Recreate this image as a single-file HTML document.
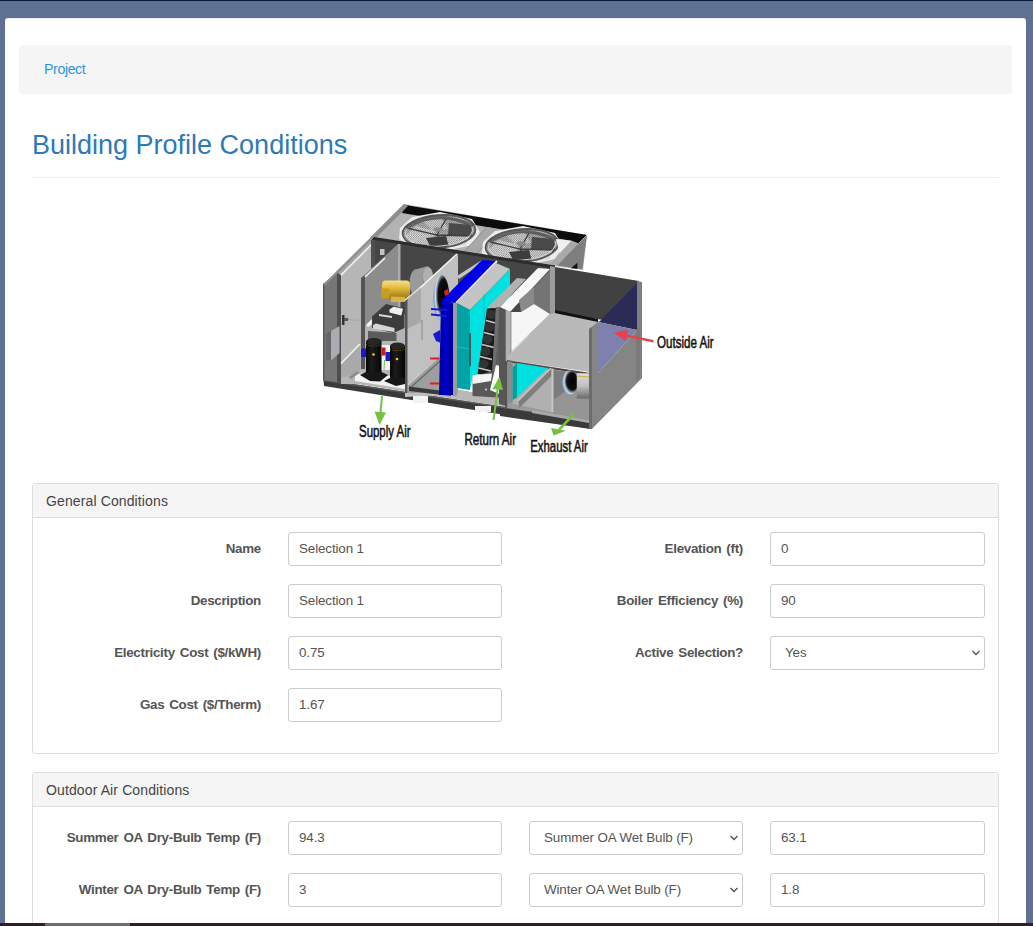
<!DOCTYPE html>
<html><head><meta charset="utf-8">
<style>
*{box-sizing:border-box;margin:0;padding:0}
html,body{width:1033px;height:926px;overflow:hidden}
body{background:#5f7092;font-family:"Liberation Sans",sans-serif;position:relative}
.topbar{position:absolute;left:0;top:0;width:1033px;height:1px;background:#021a38}
.wrap{position:absolute;left:5px;top:18px;width:1021px;height:920px;background:#fff;border-radius:3px;border-top:1px solid #eee}
.bc{position:absolute;left:14px;top:26px;width:993px;height:49px;background:#f5f5f5;border-radius:4px}
.bc a{position:absolute;left:25px;top:16px;font-size:14.2px;letter-spacing:-0.4px;color:#2a96e2;text-decoration:none}
h1{position:absolute;left:27px;top:111px;font-size:27px;font-weight:normal;color:#2e7ab5;white-space:nowrap}
.hr{position:absolute;left:27px;top:158px;width:967px;height:1px;background:#eee}
.illo{position:absolute;left:310px;top:195px}
.panel{position:absolute;left:27px;width:967px;border:1px solid #ddd;border-radius:3px;background:#fff}
.ph{height:34px;background:#f5f5f5;border-bottom:1px solid #ddd;font-size:14px;letter-spacing:0.12px;color:#444;padding:9px 13px}
.lbl{position:absolute;font-size:13.4px;letter-spacing:-0.3px;word-spacing:1.5px;font-weight:bold;color:#555;text-align:right;white-space:nowrap}
.inp{position:absolute;height:34px;border:1px solid #ccc;border-radius:3px;font-size:13.4px;letter-spacing:-0.12px;color:#555;padding:8px 10px;white-space:nowrap;background:#fff}
.sel svg{position:absolute;right:3px;top:12px}
.bottombar{position:absolute;left:0;top:923px;width:1033px;height:3px;background:#2a2228}
.bottombar i{position:absolute;left:45px;top:0;width:85px;height:3px;background:#6e6a70}
</style></head><body>
<div class="topbar"></div>
<div class="wrap">
  <div class="bc"><a>Project</a></div>
  <h1>Building Profile Conditions</h1>
  <div class="hr"></div>
</div>
<svg class="illo" width="420" height="270" viewBox="310 195 420 270">
<defs>
<pattern id="hatch" width="2.2" height="2.2" patternUnits="userSpaceOnUse"><path d="M0 2.2 L2.2 0" stroke="#3a3a3a" stroke-width="0.45"/></pattern>
<linearGradient id="mot" x1="0" y1="0" x2="0" y2="1"><stop offset="0" stop-color="#f6e08a"/><stop offset="0.45" stop-color="#e0b838"/><stop offset="1" stop-color="#9a7410"/></linearGradient>
<radialGradient id="cone" cx="0.65" cy="0.45" r="0.65"><stop offset="0" stop-color="#000"/><stop offset="0.55" stop-color="#111"/><stop offset="0.8" stop-color="#c8dcee"/><stop offset="1" stop-color="#7090b8"/></radialGradient>
<linearGradient id="comp" x1="0" y1="0" x2="1" y2="0"><stop offset="0" stop-color="#050505"/><stop offset="0.35" stop-color="#1c1c1c"/><stop offset="1" stop-color="#060606"/></linearGradient>
<linearGradient id="cyl" x1="0" y1="0" x2="0" y2="1"><stop offset="0" stop-color="#dedede"/><stop offset="0.5" stop-color="#c0c0c0"/><stop offset="1" stop-color="#6a6a6a"/></linearGradient>
<linearGradient id="drum" x1="0" y1="0" x2="1" y2="1"><stop offset="0" stop-color="#a8a8a8"/><stop offset="0.6" stop-color="#8c8c8c"/><stop offset="1" stop-color="#6e6e6e"/></linearGradient>
</defs>
<!-- ===== fan deck ===== -->
<polygon points="404,204 587,235 583,270 555,266 371,237" fill="#b3b3b3"/>
<polygon points="405,205 587,235 578.5,243.4 571.5,240.7 402,213" fill="#0c0c0c"/>
<polygon points="404,204 408,206 375,239 371,237" fill="#8e8e8e"/>
<!-- fan 1 -->
<g>
<polygon points="400,228 412,217 440,212 472,219 480,232 472,245 445,251 413,249 399,239" fill="#ececf0"/>
<ellipse cx="439" cy="231.5" rx="36.5" ry="16.3" transform="rotate(-4 439 231.5)" fill="#b4b4b4"/>
<polygon points="405,236 416,226 436,231 430,245 412,243" fill="#dedede"/>
<polygon points="423,221 441,218 448,229 433,231" fill="#d6d6d6"/>
<polygon points="447,236 470,236 466,245 447,247" fill="#d8d8d8"/>
<polygon points="449,223 472,225 472,236 448,235" fill="#4e4e4e"/>
<polygon points="426,238 446,236 449,247 431,248" fill="#3e3e3e"/>
<ellipse cx="439" cy="231.5" rx="36.5" ry="16.3" transform="rotate(-4 439 231.5)" fill="url(#hatch)"/>
<path d="M407 228 L437 235 L446 247 M437 235 L446 219 M437 235 L471 236" stroke="#3e3e3e" stroke-width="1.3" fill="none"/>
<ellipse cx="439" cy="231.5" rx="36.5" ry="16.3" transform="rotate(-4 439 231.5)" fill="none" stroke="#575757" stroke-width="1.8"/>
<ellipse cx="439" cy="231.5" rx="33.5" ry="14.5" transform="rotate(-4 439 231.5)" fill="none" stroke="#d0d0d0" stroke-width="1"/>
<path d="M406 228 Q437 208 473 226" stroke="#4a4a4a" stroke-width="3.5" fill="none" opacity="0.75"/>
<ellipse cx="438" cy="229.5" rx="4.5" ry="2.2" fill="#8a8a8a"/>
</g>
<!-- divider -->
<polygon points="487,227 499,229.5 477.6,252.8 464.8,250.8" fill="#a8a8a8"/>
<polyline points="487,227 464.8,250.8" fill="none" stroke="#777" stroke-width="0.6"/>
<polyline points="499,229.5 477.6,252.8" fill="none" stroke="#777" stroke-width="0.6"/>
<!-- fan 2 -->
<g transform="translate(83,14)">
<polygon points="400,228 412,217 440,212 472,219 480,232 472,245 445,251 413,249 399,239" fill="#ececf0"/>
<ellipse cx="439" cy="231.5" rx="36.5" ry="16.3" transform="rotate(-4 439 231.5)" fill="#b4b4b4"/>
<polygon points="405,236 416,226 436,231 430,245 412,243" fill="#dedede"/>
<polygon points="423,221 441,218 448,229 433,231" fill="#d6d6d6"/>
<polygon points="447,236 470,236 466,245 447,247" fill="#d8d8d8"/>
<polygon points="449,223 472,225 472,236 448,235" fill="#4e4e4e"/>
<polygon points="426,238 446,236 449,247 431,248" fill="#3e3e3e"/>
<ellipse cx="439" cy="231.5" rx="36.5" ry="16.3" transform="rotate(-4 439 231.5)" fill="url(#hatch)"/>
<path d="M407 228 L437 235 L446 247 M437 235 L446 219 M437 235 L471 236" stroke="#3e3e3e" stroke-width="1.3" fill="none"/>
<ellipse cx="439" cy="231.5" rx="36.5" ry="16.3" transform="rotate(-4 439 231.5)" fill="none" stroke="#575757" stroke-width="1.8"/>
<ellipse cx="439" cy="231.5" rx="33.5" ry="14.5" transform="rotate(-4 439 231.5)" fill="none" stroke="#d0d0d0" stroke-width="1"/>
<path d="M406 228 Q437 208 473 226" stroke="#4a4a4a" stroke-width="3.5" fill="none" opacity="0.75"/>
<ellipse cx="438" cy="229.5" rx="4.5" ry="2.2" fill="#8a8a8a"/>
</g>
<!-- right end of top section -->
<polygon points="556,239 571.5,240.7 559.6,253.6" fill="#f0f0f4"/>
<polygon points="571.5,240.7 578.5,243.4 557.4,265.5 549.3,265" fill="#a9a9a9"/>
<polygon points="578.5,243.4 587,235 582.3,269.3 557.4,265.5" fill="#7e7e7e"/>
<polyline points="578.5,243.4 587,235" fill="none" stroke="#b0b0b0" stroke-width="1"/>
<polygon points="571,268.2 577.4,262.8 577.4,268.8" fill="#111"/>
<!-- ===== interior back wall ===== -->
<polygon points="371,237 555,266 555,340 371,310" fill="#464646"/>
<polygon points="371,236.5 555,265.5 555,268.5 371,239.5" fill="#2c2c2c"/>
<!-- floor & base rail -->
<polygon points="324.5,378 337,376 341,378 360,372 405,380 505,398 592,414 592,420 324,379" fill="#b8b8b8"/>
<polygon points="323.5,379.5 592,420 592,429 324,386" fill="#3a3a3a"/>
<polygon points="323.5,379.5 592,420 592,421.5 323.5,381" fill="#5a5a5a"/>
<!-- ===== left end ===== -->
<polygon points="323,284 337,272 337,382 323,380" fill="#767676"/>
<polygon points="323,284 324.5,283 324.5,380 323,380" fill="#555"/>
<polygon points="337,272 341,274 341,383 337,382" fill="#4e4e4e"/>
<polygon points="341,276 372,240 372,384 341,384" fill="#b6b6b6"/>
<polygon points="336,272 372,237.5 372,243 341,275" fill="#a2a2a2"/>
<polyline points="341,275 372,244" fill="none" stroke="#f4f4f4" stroke-width="1.6"/>
<polyline points="324.3,285 404.6,205.2" fill="none" stroke="#8e8e8e" stroke-width="2.2"/>
<polygon points="371,240 375,240 375,267 371,268" fill="#505050"/>
<rect x="380" y="249" width="4.5" height="6" fill="#c4c4c4"/>
<!-- electrical box & latch -->
<polygon points="326,334 331,331 331,360.5 326,360" fill="#666"/>
<polygon points="331,331 339.5,326 339.5,353 331,360.5" fill="#ababb3"/>
<rect x="342" y="315" width="2.5" height="10" fill="#333"/>
<rect x="344" y="318" width="4" height="3" fill="#555"/>
<line x1="348" y1="319.5" x2="360" y2="320.5" stroke="#777" stroke-width="0.6" stroke-dasharray="1,1.5"/>
<!-- panel 2 bottom/floor -->
<polygon points="341,364 360,344 360,372 341,378" fill="#a9a9a9"/>
<polyline points="341,363.5 360,344" fill="none" stroke="#f4f4f4" stroke-width="1.6"/>
<!-- panel 3 -->
<polygon points="361,278 398,244 398,320 365,330 361,330" fill="#8c8c8c"/>
<polygon points="398,244 400.5,244 400.5,318 398,319" fill="#aaaaaa"/>
<polygon points="361,278 365,275 365,369 361,369" fill="#545454"/>
<polyline points="365,277 385,258" fill="none" stroke="#f2f2f2" stroke-width="1.5"/>
<!-- compressor bay -->
<polygon points="365,326 405,314 405,380 365,378" fill="#b4b4b4"/>
<polygon points="366,325 373,318 376,321 368,327" fill="#f4f4f4"/>
<!-- motor & blower -->
<polygon points="414,270 428,266 434,290 416,297" fill="url(#drum)"/>
<ellipse cx="416" cy="283" rx="6.5" ry="13.5" fill="#9a9a9a"/>
<ellipse cx="428" cy="276" rx="5" ry="9" fill="#b0b0b0"/>
<rect x="382" y="280.5" width="28" height="18" rx="4" fill="url(#mot)"/>
<rect x="381" y="288.5" width="8.5" height="10" rx="1" fill="#c89e22"/>
<polygon points="391,296.5 405,297 405,302 391,302" fill="#d9b445"/>
<!-- motor base tray -->
<polygon points="372,316.5 386,304 404.5,308.5 404.5,328 393.5,333 372,328" fill="#3c3c3c"/>
<polygon points="389.5,309.5 393.5,306.8 403,308.7 401.3,315.5 389.5,312.6" fill="#f0f0f0"/>
<polygon points="379,314 392,316 392,318 379,316" fill="#d8d8d8"/>
<polygon points="373,325 376,323.5 394.5,328 394.5,332 373,329" fill="#d6d6d6"/>
<polygon points="368,331 396.5,333 396.5,341 368,341" fill="#5c5c5c"/>
<!-- compressors -->
<rect x="381" y="345" width="10" height="25" fill="#f2f2f2"/>
<line x1="384.5" y1="360" x2="384" y2="370" stroke="#76c043" stroke-width="1"/>
<rect x="366" y="341" width="15.5" height="35" fill="url(#comp)"/>
<ellipse cx="373.75" cy="341.5" rx="7.75" ry="3.5" fill="#262626"/>
<polyline points="366,344.5 370,346 377,346 381.5,344.5" fill="none" stroke="#b8a020" stroke-width="0.6" stroke-dasharray="1,1"/>
<polygon points="355,374 375,373 405,379 405,389 355,381" fill="#f2f2f2"/>
<polygon points="360,375 366,372 381.5,372 388,375 380,381.5 370,381" fill="#161616"/>
<rect x="390" y="345.5" width="15" height="36" fill="url(#comp)"/>
<ellipse cx="397.5" cy="346" rx="7.5" ry="3.5" fill="#262626"/>
<polyline points="390,349 394,350.5 401,350.5 405,349" fill="none" stroke="#b8a020" stroke-width="0.6" stroke-dasharray="1,1"/>
<polygon points="384,381 390,378 405,378 405,384 396,386" fill="#161616"/>
<rect x="361" y="348.5" width="5" height="8.5" fill="#1818c8"/>
<rect x="385.5" y="352" width="4.5" height="9" fill="#1818c8"/>
<rect x="381.5" y="347.5" width="4" height="8" fill="#d01818"/>
<circle cx="373.5" cy="354.5" r="1.3" fill="#f0d030"/>
<circle cx="397" cy="359" r="1.3" fill="#f0d030"/>
<polygon points="348.5,377 357,371.5 359.5,373 351,379" fill="#8c8c8c"/>
<!-- ===== fan wall partition ===== -->
<polygon points="405,300 421,287 458,254 458,394 405,397" fill="#c0c0c0"/>
<polygon points="405,300 421,287 421,322 405,330" fill="#a8a8a8"/>
<polygon points="405,300 407.5,299 407.5,393 405,393" fill="#555"/>
<polyline points="404.5,300.5 421,287" fill="none" stroke="#e8e8e8" stroke-width="1.2"/>
<polyline points="420.5,287.5 457,254" fill="none" stroke="#f8f8f8" stroke-width="1.6"/>
<line x1="422" y1="320" x2="422" y2="340" stroke="#8a8a8a" stroke-width="1"/>
<ellipse cx="441.4" cy="298" rx="8" ry="23" fill="url(#cone)"/>
<polygon points="408,385 439,356 458,340 458,394 408,393" fill="#9e9e9e"/>
<polyline points="408,385 458,340" fill="none" stroke="#d8d8d8" stroke-width="1"/>
<polyline points="410,388 458,345" fill="none" stroke="#6a6a6a" stroke-width="1.4"/>
<polygon points="409,386.5 451,392 451,396 409,391" fill="#3a3a3a"/>
<!-- ===== blue coil ===== -->
<polygon points="457,276 482,260 484,262 459,279" fill="#c4c4c4"/>
<polygon points="482,260 497,261 456,303 441,301" fill="#0000e8"/>
<polygon points="441,301 456,303 453,395 439,395" fill="#0000a8"/>
<polygon points="444,301 449,302 447,395 444,395" fill="#0000c8"/>
<polyline points="456,303 497,261" fill="none" stroke="#eeeeee" stroke-width="1.8"/>
<polygon points="444,291 448,289 449,294 445,296" fill="#e02020"/>
<polygon points="431,308 447,309 447,311 431,310" fill="#1818d0"/>
<polygon points="431,313.5 446,315 446,317 431,315.5" fill="#1818d0"/>
<polygon points="433,334 440,330 441,343 436,341" fill="#1818d0"/>
<rect x="430" y="357.5" width="9" height="2" fill="#d82020"/>
<rect x="430" y="382.5" width="9" height="2" fill="#d82020"/>
<polygon points="453,303 457,303 457,396 453,396" fill="#9c9c9c"/>
<!-- ===== filter ===== -->
<polygon points="456,303 496,263 510,269 470,310" fill="#c4c4c4"/>
<polygon points="457,303 470,310 470,390 457,388" fill="#00a4a4"/>
<line x1="457" y1="347" x2="470" y2="349" stroke="#00d0d0" stroke-width="0.8"/>
<polygon points="470,310 510,269 510,300 488,309 477.5,375 472.5,377 470,390" fill="#00e2e2"/>
<line x1="484" y1="294" x2="484" y2="320" stroke="#00b8b8" stroke-width="0.6"/>
<polygon points="469,334 471,333 471,366 469,367" fill="#555"/>
<!-- ===== exhaust damper rack ===== -->
<polygon points="487,308 517,278 526,279 499,308" fill="#b2b2b2"/>
<polygon points="487,308.6 499,308.6 494,374.5 477.5,374.5" fill="#1b1b1b"/>
<g fill="#333">
<ellipse cx="491.5" cy="314.5" rx="5" ry="4.5"/><ellipse cx="489.5" cy="327" rx="5" ry="4.5"/><ellipse cx="487.5" cy="339.5" rx="5" ry="4.5"/><ellipse cx="485.5" cy="351.5" rx="5" ry="4.5"/><ellipse cx="483.5" cy="364" rx="5" ry="4.5"/>
</g>
<g stroke="#c8c8c8" stroke-width="1.7">
<line x1="486" y1="320.5" x2="497.5" y2="323.5"/><line x1="484" y1="332.5" x2="495.6" y2="335.5"/><line x1="482" y1="344.5" x2="494" y2="347.5"/><line x1="480" y1="356.5" x2="492" y2="359.5"/><line x1="478.5" y1="368" x2="491" y2="371"/>
</g>
<polygon points="496,307 506,310 506,396 492,376" fill="#5e5e5e"/>
<polygon points="496,307 499.5,307 495,376 492,376" fill="#6e6e6e"/>
<polygon points="472.5,377 505,367 505,398 472.5,396" fill="#585858"/>
<polygon points="472.5,375 492,373.5 491,381 472.5,384" fill="#f4f4f4"/>
<polygon points="490,390 496,365 505,367 504,396" fill="#fbfbfb"/>
<circle cx="486" cy="389.5" r="0.9" fill="#eee"/>
<!-- ===== white duct ===== -->
<polygon points="500,307 538,268 550,269 510,312" fill="#f7f7f7"/>
<polygon points="534,287 550,270 550,314 534,304" fill="#747474"/>
<polygon points="519,300 534,287 534,304 521,312" fill="#8a8a8a"/>
<polygon points="510,312 521,312 534,304 550,314 511,353" fill="#f6f6f6"/>
<polyline points="511,352 550,314" fill="none" stroke="#d0d0d0" stroke-width="1"/>
<polygon points="499,308 506,310 506,406 499,404" fill="#565656"/>
<polygon points="505.7,310 511,312 511,406 505.7,406" fill="#b2b2b2"/>
<polyline points="511,312 511,406" stroke="#777" stroke-width="0.7"/>
<!-- ===== hood ===== -->
<polygon points="550,266 555,267 555,313 550,315" fill="#9c9c9c"/>
<polygon points="555,267 639,281 633,325 555,312" fill="#414141"/>
<polygon points="555,310 598,319 598,324 555,315" fill="#121212"/>
<polygon points="600,321 639,281 637,330 598,322" fill="#2b2b58"/>
<polygon points="598,322 637,330 598,373" fill="#7e80ae"/>
<polygon points="637,281 642,282 642,378 637,380" fill="#7e7e7e"/>
<polygon points="511,353 550,314 554.5,313 598,322 590,372 507,360 507,357" fill="#b9b9b9"/>
<polygon points="507,360 589,372.8 589,375 507,362.5" fill="#4a4a4a"/>
<!-- lower section -->
<polygon points="507,362 589,375 589,420 507,408" fill="#9a9a9a"/>
<polygon points="512.6,364 552,370 552,412 512.6,404" fill="#b0b0b0"/>
<polygon points="505,361 507.3,361 507.3,407.3 505,407.3" fill="#555"/>
<polygon points="507.3,361 512.6,362 512.6,402.5 507.3,403" fill="#8a8a8a"/>
<polygon points="512.6,367.5 517,363 517,397.6 512.6,400" fill="#00a0a0"/>
<polygon points="517,363 547.6,368 517,397.6" fill="#00e0e0"/>
<polygon points="518.5,401.5 551.5,368.5 551.5,376 519.4,408" fill="#7e7e7e"/>
<polyline points="517.5,401 551,368" fill="none" stroke="#c8c8c8" stroke-width="1.2"/>
<polygon points="553.4,370 589,375 589,420 553.4,413" fill="#7c7c7c"/>
<polygon points="553.4,400 575,384 589,388 589,420 553.4,413" fill="#959595"/>
<polygon points="551.5,368.5 553.4,368.8 553.4,412.2 551.5,412" fill="#c8c8c8"/>
<ellipse cx="570" cy="382.5" rx="8" ry="12" fill="url(#cone)"/>
<rect x="576.8" y="373.3" width="12.1" height="25.3" fill="url(#cyl)"/>
<line x1="577" y1="376" x2="589" y2="377" stroke="#d8a020" stroke-width="0.8"/>
<polygon points="532,410 589,420 589,423 532,413" fill="#a8a8a8"/>
<polygon points="500,409 589,423.9 589,428.7 500,416" fill="#3a3a3a"/>
<!-- right end face -->
<polygon points="589,329 598,322 598,373 637,330 642,378 592,429 589,429" fill="#858585"/>
<polygon points="589,329 592,327 592,429 589,429" fill="#6c6c6c"/>
<polygon points="636,331 640,328 640,378 636,382" fill="#7a7a7a"/>
<circle cx="624" cy="377.5" r="0.9" fill="#c09040"/>
<!-- labels on rail -->
<rect x="413" y="396" width="15" height="7" fill="#f2f2f2"/>
<rect x="475" y="406" width="16" height="6" fill="#f2f2f2"/>
<!-- ===== arrows ===== -->
<g fill="#76c043" stroke="none">
<polygon points="381,396 383,396 381.5,413 379.5,413"/>
<polygon points="374.5,411.5 386,412.5 379.5,425"/>
<polygon points="492.5,420 494.5,420 499,386 497,386"/>
<polygon points="492.5,389 503,390 499.5,376.5"/>
<polygon points="573,413 575,415 560,430.5 558,429"/>
<polygon points="551,428 566,430.7 553.5,435.5"/>
</g>
<g fill="#e8424a">
<polygon points="653.5,340 653.5,342.5 624,336.5 624,334"/>
<polygon points="613.8,332.8 628,329.6 625.8,341"/>
</g>
<g font-family="Liberation Sans" font-size="15.6" fill="#151515" stroke="#151515" stroke-width="0.55">
<text x="359" y="437.3" textLength="51.5" lengthAdjust="spacingAndGlyphs">Supply Air</text>
<text x="464.5" y="444.5" textLength="51.5" lengthAdjust="spacingAndGlyphs">Return Air</text>
<text x="530.3" y="451.8" textLength="57.4" lengthAdjust="spacingAndGlyphs">Exhaust Air</text>
<text x="657" y="347.7" textLength="56.6" lengthAdjust="spacingAndGlyphs">Outside Air</text>
</g>
</svg>
<!-- panel 1 -->
<div class="panel" style="top:483px;height:271px;left:32px">
  <div class="ph">General Conditions</div>
</div>
<div class="lbl" style="right:772px;top:541px">Name</div>
<div class="inp" style="left:288px;top:532px;width:214px">Selection 1</div>
<div class="lbl" style="right:772px;top:593px">Description</div>
<div class="inp" style="left:288px;top:584px;width:214px">Selection 1</div>
<div class="lbl" style="right:772px;top:645px">Electricity Cost ($/kWH)</div>
<div class="inp" style="left:288px;top:636px;width:214px">0.75</div>
<div class="lbl" style="right:772px;top:697px">Gas Cost ($/Therm)</div>
<div class="inp" style="left:288px;top:688px;width:214px">1.67</div>

<div class="lbl" style="right:290px;top:541px">Elevation (ft)</div>
<div class="inp" style="left:770px;top:532px;width:215px">0</div>
<div class="lbl" style="right:290px;top:593px">Boiler Efficiency (%)</div>
<div class="inp" style="left:770px;top:584px;width:215px">90</div>
<div class="lbl" style="right:290px;top:645px">Active Selection?</div>
<div class="inp sel" style="left:770px;top:636px;width:215px;padding-left:14px">Yes<svg width="10" height="8" viewBox="0 0 10 8"><path d="M1.5 2 L5 5.5 L8.5 2" fill="none" stroke="#505050" stroke-width="1.3"/></svg></div>

<!-- panel 2 -->
<div class="panel" style="top:772px;height:200px;left:32px">
  <div class="ph">Outdoor Air Conditions</div>
</div>
<div class="lbl" style="right:772px;top:830px">Summer OA Dry-Bulb Temp (F)</div>
<div class="inp" style="left:288px;top:821px;width:214px">94.3</div>
<div class="inp sel" style="left:529px;top:821px;width:214px;padding-left:14px">Summer OA Wet Bulb (F)<svg width="10" height="8" viewBox="0 0 10 8"><path d="M1.5 2 L5 5.5 L8.5 2" fill="none" stroke="#505050" stroke-width="1.3"/></svg></div>
<div class="inp" style="left:770px;top:821px;width:215px">63.1</div>
<div class="lbl" style="right:772px;top:882px">Winter OA Dry-Bulb Temp (F)</div>
<div class="inp" style="left:288px;top:873px;width:214px">3</div>
<div class="inp sel" style="left:529px;top:873px;width:214px;padding-left:14px">Winter OA Wet Bulb (F)<svg width="10" height="8" viewBox="0 0 10 8"><path d="M1.5 2 L5 5.5 L8.5 2" fill="none" stroke="#505050" stroke-width="1.3"/></svg></div>
<div class="inp" style="left:770px;top:873px;width:215px">1.8</div>

<div class="bottombar"><i></i></div>
</body></html>
